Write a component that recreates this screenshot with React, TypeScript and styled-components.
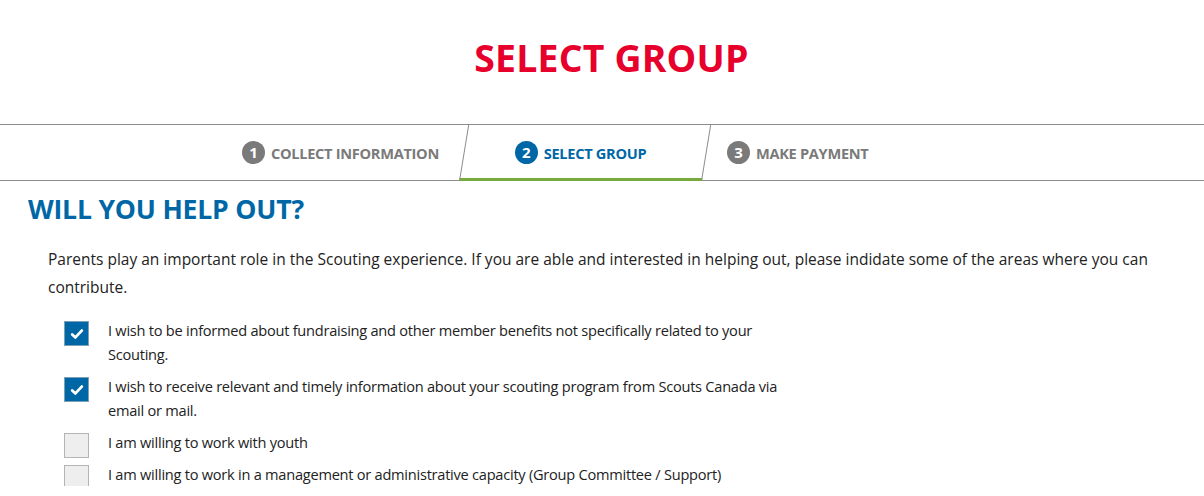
import React from "react";
import styled, { createGlobalStyle } from "styled-components";

const GlobalStyle = createGlobalStyle`
  html, body {
    margin: 0;
    padding: 0;
    background: #ffffff;
  }
  body {
    font-family: "Open Sans", "Liberation Sans", sans-serif;
    color: #222;
  }
`;

const Page = styled.div`
  width: 1204px;
  display: flex;
  flex-direction: column;
`;

const TitleArea = styled.header`
  height: 124px;
  padding-left: 19px;
  box-sizing: border-box;
  display: flex;
  align-items: center;
  justify-content: center;
`;

const Title = styled.h1`
  margin: 0 0 10px;
  font-size: 37.4px;
  font-weight: 700;
  letter-spacing: 0.2px;
  color: #e8002d;
`;

const StepBar = styled.nav`
  height: 55px;
  border-top: 1px solid #8c8c8c;
  border-bottom: 1px solid #8c8c8c;
  display: flex;
  justify-content: center;
`;

const Step = styled.div<{ $active?: boolean; $width: number; $pad?: number; $align?: string }>`
  position: relative;
  width: ${({ $width }) => $width}px;
  display: flex;
  align-items: center;
  justify-content: ${({ $align }) => $align || "center"};
  padding-left: ${({ $pad }) => $pad || 0}px;
  gap: 6px;
  box-sizing: border-box;
  color: ${({ $active }) => ($active ? "#0067a7" : "#7a7a7a")};

  ${({ $active }) =>
    $active &&
    `
    &::before {
      content: "";
      position: absolute;
      left: 0;
      right: 0;
      top: 0;
      bottom: -1px;
      border-left: 1px solid #8c8c8c;
      border-right: 1px solid #8c8c8c;
      border-bottom: 3px solid #76aa3c;
      transform: skewX(-9.3deg);
      transform-origin: bottom left;
    }
  `}
`;

const StepNumber = styled.span<{ $active?: boolean }>`
  position: relative;
  width: 23px;
  height: 23px;
  border-radius: 50%;
  background: ${({ $active }) => ($active ? "#0067a7" : "#7a7a7a")};
  color: #ffffff;
  font-size: 15px;
  font-weight: 700;
  display: flex;
  align-items: center;
  justify-content: center;
  line-height: 1;
`;

const StepLabel = styled.span`
  position: relative;
  font-size: 14.6px;
  font-weight: 700;
  letter-spacing: -0.3px;
`;

const Content = styled.section`
  padding: 12px 28px 0;
  display: flex;
  flex-direction: column;
`;

const SectionTitle = styled.h2`
  margin: 0;
  font-size: 26.6px;
  font-weight: 700;
  color: #0067a7;
  letter-spacing: -0.2px;
  line-height: 32px;
`;

const Intro = styled.p`
  margin: 20px 0 0 20px;
  font-size: 15.5px;
  line-height: 28px;
  color: #222;
`;

const Options = styled.div`
  margin: 17px 0 0 36px;
  display: flex;
  flex-direction: column;
  gap: 8px;
  width: 720px;
`;

const Option = styled.label`
  display: flex;
  align-items: flex-start;
  gap: 19px;
`;

const Box = styled.span<{ $checked?: boolean }>`
  flex: none;
  width: 23px;
  height: 23px;
  margin: 3px 0 -4px;
  border: 1px solid ${({ $checked }) => ($checked ? "#7f9fb5" : "#b4b4b4")};
  background: ${({ $checked }) => ($checked ? "#0067a7" : "#eeeeee")};
  display: flex;
  align-items: center;
  justify-content: center;
`;

const OptionText = styled.span<{ $wide?: boolean }>`
  font-size: 14.6px;
  line-height: 24px;
  color: #222;
  letter-spacing: -0.25px;
  max-width: ${({ $wide }) => ($wide ? "640px" : "672px")};
`;

const Check = () => (
  <svg width="16" height="16" viewBox="0 0 16 16">
    <path
      d="M3.2 8.4 L6.4 11.4 L12.8 4.6"
      fill="none"
      stroke="#ffffff"
      strokeWidth="2.8"
      strokeLinecap="round"
      strokeLinejoin="round"
    />
  </svg>
);

const options = [
  {
    checked: true,
    text: "I wish to be informed about fundraising and other member benefits not specifically related to your Scouting.",
  },
  {
    checked: true,
    text: "I wish to receive relevant and timely information about your scouting program from Scouts Canada via email or mail.",
  },
  { checked: false, text: "I am willing to work with youth" },
  {
    checked: false,
    text: "I am willing to work in a management or administrative capacity (Group Committee / Support)",
  },
];

export default function App() {
  return (
    <Page>
      <GlobalStyle />
      <TitleArea>
        <Title>SELECT GROUP</Title>
      </TitleArea>
      <StepBar>
        <Step $width={243} $pad={6}>
          <StepNumber>1</StepNumber>
          <StepLabel>COLLECT INFORMATION</StepLabel>
        </Step>
        <Step $width={243} $active>
          <StepNumber $active>2</StepNumber>
          <StepLabel>SELECT GROUP</StepLabel>
        </Step>
        <Step $width={286} $pad={25} $align="flex-start">
          <StepNumber>3</StepNumber>
          <StepLabel>MAKE PAYMENT</StepLabel>
        </Step>
      </StepBar>
      <Content>
        <SectionTitle>WILL YOU HELP OUT?</SectionTitle>
        <Intro>
          Parents play an important role in the Scouting experience. If you are able and
          interested in helping out, please indidate some of the areas where you can
          contribute.
        </Intro>
        <Options>
          {options.map((o) => (
            <Option key={o.text}>
              <Box $checked={o.checked}>{o.checked && <Check />}</Box>
              <OptionText $wide={!o.checked}>{o.text}</OptionText>
            </Option>
          ))}
        </Options>
      </Content>
    </Page>
  );
}
